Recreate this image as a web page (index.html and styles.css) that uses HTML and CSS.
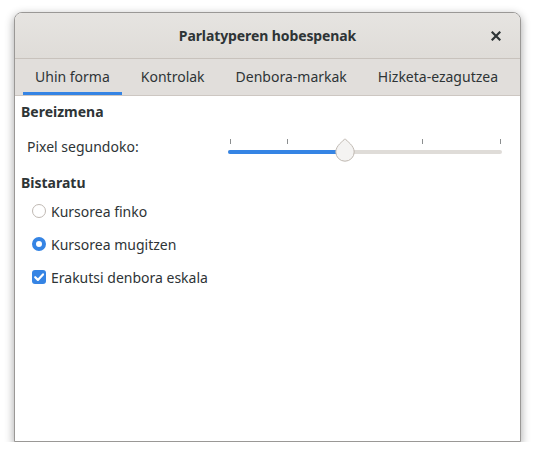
FILE: index.html
```html
<!DOCTYPE html>
<html>
<head>
<meta charset="utf-8">
<link rel="stylesheet" href="styles.css">
</head>
<body>
<div class="window">
  <div class="headerbar">
    <div class="title">Parlatyperen hobespenak</div>
    <div class="close">
      <svg width="10" height="10" viewBox="0 0 10 10"><path d="M1.5 1.5 L8.5 8.5 M8.5 1.5 L1.5 8.5" stroke="#2e3436" stroke-width="2.2" stroke-linecap="square"/></svg>
    </div>
  </div>
  <div class="tabs">
    <div class="tab active">Uhin forma</div>
    <div class="tab">Kontrolak</div>
    <div class="tab">Denbora-markak</div>
    <div class="tab">Hizketa-ezagutzea</div>
  </div>
  <div class="content">
    <div class="section-title">Bereizmena</div>
    <div class="scale-row">
      <div class="scale-label">Pixel segundoko:</div>
      <div class="scale">
        <div class="ticks">
          <span class="tick t1"></span>
          <span class="tick t2"></span>
          <span class="tick t3"></span>
          <span class="tick t4"></span>
        </div>
        <div class="trough"><div class="fill"></div></div>
        <svg class="knob" width="20" height="24" viewBox="0 0 20 24">
          <path d="M10 0.8 C12 3.2 19.2 7.5 19.2 14 A9.2 9.2 0 0 1 0.8 14 C0.8 7.5 8 3.2 10 0.8 Z" fill="#f4f3f2" stroke="#bfb8b1" stroke-width="1"/>
        </svg>
      </div>
    </div>
    <div class="section-title second">Bistaratu</div>
    <div class="options">
      <div class="option"><span class="radio"></span><span>Kursorea finko</span></div>
      <div class="option"><span class="radio checked"></span><span>Kursorea mugitzen</span></div>
      <div class="option"><span class="check"><svg width="14" height="14" viewBox="0 0 14 14"><path d="M3.2 7.2 L5.9 9.9 L11 4.4" fill="none" stroke="#fff" stroke-width="2.2" stroke-linecap="round" stroke-linejoin="round"/></svg></span><span>Erakutsi denbora eskala</span></div>
    </div>
  </div>
</div>
</body>
</html>
```

FILE: styles.css
```css
html, body {
  margin: 0;
  background: #ffffff;
}
body {
  padding: 12px 0 0 14px;
  font-family: "Noto Sans", "Open Sans", sans-serif;
  font-size: 14px;
  color: #2e3436;
}
.window {
  width: 505px;
  height: 428px;
  border: 1px solid #9a9896;
  border-radius: 8px 8px 0 0;
  background: #ffffff;
  box-shadow: 0 3px 9px 1px rgba(0,0,0,0.3);
  display: flex;
  flex-direction: column;
  overflow: hidden;
}
.headerbar {
  height: 45px;
  background: linear-gradient(#e6e4e1, #dfdcd8);
  border-bottom: 1px solid #c8c2bc;
  display: flex;
  align-items: center;
  justify-content: center;
  position: relative;
}
.title {
  font-weight: bold;
  font-size: 14px;
  letter-spacing: -0.1px;
}
.close {
  position: absolute;
  right: 19px;
  top: 18px;
  width: 10px;
  height: 10px;
  display: flex;
}
.tabs {
  height: 36px;
  background: #e1dedb;
  border-bottom: 1px solid #cdc7c2;
  display: flex;
  padding-left: 8px;
  gap: 7px;
}
.tab {
  padding: 0 12px;
  line-height: 36px;
  height: 36px;
  box-sizing: border-box;
  color: #2e3436;
}
.tab.active {
  border-bottom: 3px solid #3584e4;
}
.content {
  padding: 7px 0 0 6px;
  flex: 1;
}
.section-title {
  font-weight: bold;
  height: 18px;
  line-height: 18px;
}
.section-title.second {
  margin-top: 12px;
}
.scale-row {
  margin-top: 17px;
  height: 24px;
  display: flex;
  align-items: flex-start;
}
.scale-label {
  padding-left: 6px;
  line-height: 18px;
}
.scale {
  margin-left: auto;
  margin-right: 18px;
  width: 274px;
  height: 24px;
  position: relative;
}
.ticks {
  position: absolute;
  left: 0;
  top: 1px;
  width: 100%;
  height: 5px;
}
.tick {
  position: absolute;
  top: 0;
  width: 1px;
  height: 5px;
  background: #8b8e8f;
}
.t1 { left: 2px; }
.t2 { left: 59px; }
.t3 { left: 194px; }
.t4 { left: 272px; }
.trough {
  position: absolute;
  left: 0;
  right: 0;
  top: 12px;
  height: 4px;
  border-radius: 2px;
  background: #dfdcd8;
}
.fill {
  width: 113px;
  height: 100%;
  border-radius: 2px;
  background: #3584e4;
}
.knob {
  position: absolute;
  left: 107px;
  top: 0;
}
.options {
  margin-top: 8px;
  display: flex;
  flex-direction: column;
  gap: 11px;
}
.option {
  height: 22px;
  display: flex;
  align-items: center;
  padding-left: 11px;
  gap: 5px;
}
.radio {
  width: 14px;
  height: 14px;
  box-sizing: border-box;
  border: 1px solid #c0b9b3;
  border-radius: 50%;
  background: #fff;
}
.radio.checked {
  border: 4px solid #3584e4;
  background: #fff;
}
.check {
  width: 14px;
  height: 14px;
  border-radius: 3px;
  background: #3584e4;
  display: flex;
}
```
